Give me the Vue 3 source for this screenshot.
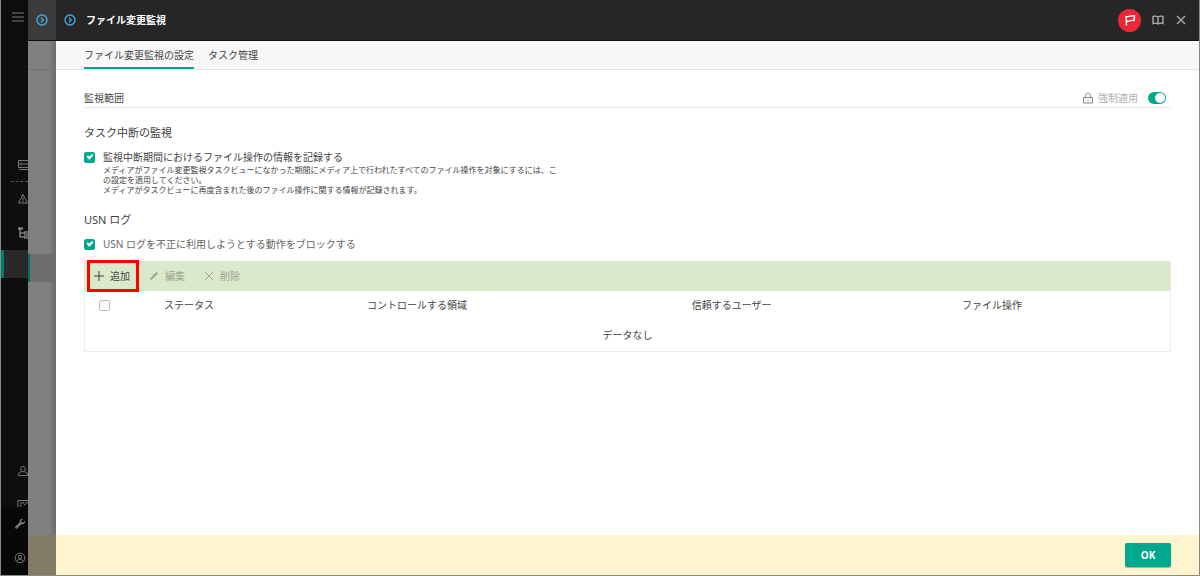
<template>
  <div class="console">
    <nav class="sideNav" aria-label="メニュー">
      <button type="button" class="navBtn menuBtn" aria-label="メニューを開く">
        <svg width="12" height="10" viewBox="0 0 12 10"><path d="M0 1h12M0 5h12M0 9h12" /></svg>
      </button>
      <div class="navGroup">
        <a href="#" class="navBtn" v-for="item in navTop" v-bind:key="item.name" v-bind:class="item.name" v-bind:aria-label="item.label">
          <svg width="12" height="12" viewBox="0 0 12 12"><path v-bind:d="item.path" /></svg>
        </a>
        <a href="#" class="navCurrent" aria-label="デバイス"></a>
      </div>
      <div class="navGroup navUser">
        <a href="#" class="navBtn" aria-label="ユーザー">
          <svg width="12" height="12" viewBox="0 0 12 12"><path d="M6 1.5c-1.5 0-2.3 1-2.3 2.4S4.5 6.8 6 6.8s2.3-1.5 2.3-2.9S7.5 1.5 6 1.5zM4.5 6.5L1.5 8.500v2h9v-2L7.5 6.5" /></svg>
        </a>
        <a href="#" class="navBtn navCut" aria-label="操作">
          <svg width="12" height="12" viewBox="0 0 12 12"><path d="M1 1.500h11v9H1zM3 4h4M3 6.500h2M7 6l4-3" /></svg>
        </a>
      </div>
      <div class="navFoot">
        <a href="#" class="navBtn" aria-label="設定">
          <svg width="12" height="12" viewBox="0 0 12 12"><path class="filled" d="M10.8 2.8L9 4.6 7.5 4.2 7.2 2.8 9 1C7.3.4 5.2 1.8 5.7 4.2L1.2 8.800c-.9 1 .8 2.700 1.800 1.800L7.600 6.200c2.200.6 3.900-1.300 3.200-3.400z" /></svg>
        </a>
        <a href="#" class="navBtn" aria-label="アカウント">
          <svg width="12" height="12" viewBox="0 0 12 12"><circle cx="6" cy="6" r="4.8" /><circle cx="6" cy="5" r="1.7" /><path d="M3.2 9.5c.4-3 5.2-3 5.6 0" /></svg>
        </a>
      </div>
    </nav>

    <div class="backPanel">
      <div class="backHead">
        <button type="button" class="iconBtn blue" aria-label="前のパネル">
          <svg width="12" height="12" viewBox="0 0 12 12"><circle cx="6" cy="6" r="5" /><path d="M5 3.8L7.2 6 5 8.2" /></svg>
        </button>
      </div>
      <div class="backTabs"></div>
      <div class="backBody"><div class="backCurrent"></div></div>
      <div class="backFoot"></div>
    </div>

    <main class="panel">
      <header class="panelHead">
        <button type="button" class="iconBtn blue" aria-label="パネルを閉じる">
          <svg width="12" height="12" viewBox="0 0 12 12"><circle cx="6" cy="6" r="5" /><path d="M5 3.8L7.2 6 5 8.2" /></svg>
        </button>
        <h1>ファイル変更監視</h1>
        <div class="headTools">
          <button type="button" class="iconBtn flagBtn" aria-label="通知">
            <svg width="12" height="12" viewBox="0 0 12 12"><path d="M2.5 11.5L2 2M2 2.5c2 1.2 4-1.7 8.500-.6L10 6.600C6.500 5.600 4.500 8 2.300 7" /></svg>
          </button>
          <button type="button" class="iconBtn" aria-label="ヘルプ">
            <svg width="12" height="12" viewBox="0 0 12 12"><path d="M6 3C4.500 2 2.500 2 1 2.500v7C2.500 9 4.500 9 6 10c1.500-1 3.500-1 5-.5v-7C9.500 2 7.500 2 6 3zM6 3v7" /></svg>
          </button>
          <button type="button" class="iconBtn" aria-label="閉じる">
            <svg width="12" height="12" viewBox="0 0 12 12"><path d="M2 2l8 8M10 2L2 10" /></svg>
          </button>
        </div>
      </header>

      <div class="tabs" role="tablist">
        <button type="button" role="tab" class="tab" v-for="(tab, tabIndex) in tabs" v-bind:key="tab" v-bind:class="{ active: tabIndex === currentTab }"
        v-bind:aria-selected="tabIndex === currentTab" v-on:click="currentTab = tabIndex">{{ tab }}</button>
      </div>

      <div class="content">
        <div class="scope">
          <h2>監視範囲</h2>
          <label class="enforce">
            <svg width="12" height="12" viewBox="0 0 12 12"><path d="M1.5 5.5h9v5.500h-9zM3.500 5.500V3.500c0-3 5-3 5 0v2M6 7.500v1.500" /></svg>
            <span>強制適用</span>
            <input type="checkbox" class="toggle" v-model="enforced">
          </label>
        </div>

        <section class="block">
          <h3>タスク中断の監視</h3>
          <label class="checkRow">
            <input type="checkbox" class="check" v-model="logBreak">
            <span>監視中断期間におけるファイル操作の情報を記録する</span>
          </label>
          <p class="hint">メディアがファイル変更監視タスクビューになかった期間にメディア上で行われたすべてのファイル操作を対象にするには、こ<br>の設定を適用してください。<br>メディアがタスクビューに再度含まれた後のファイル操作に関する情報が記録されます。</p>
        </section>

        <section class="block">
          <h3>USN ログ</h3>
          <label class="checkRow">
            <input type="checkbox" class="check" v-model="blockUsn">
            <span class="light">USN ログを不正に利用しようとする動作をブロックする</span>
          </label>
        </section>

        <div class="grid">
          <div class="toolbar">
            <button type="button" class="toolBtn addBtn">
              <svg width="12" height="12" viewBox="0 0 12 12"><path d="M6 1v10M1 6h10" /></svg>追加
            </button>
            <button type="button" class="toolBtn" disabled>
              <svg width="12" height="12" viewBox="0 0 12 12"><path class="filled" d="M2 10l.7-2.200L8.500 2 10 3.500 4.200 9.300z" /></svg>編集
            </button>
            <button type="button" class="toolBtn" disabled>
              <svg width="12" height="12" viewBox="0 0 12 12"><path d="M2 2l8 8M10 2L2 10" /></svg>削除
            </button>
          </div>
          <table>
            <thead>
              <tr>
                <th class="colCheck"><input type="checkbox" class="check" aria-label="すべて選択" v-model="allRows"></th>
                <th class="colStatus">ステータス</th>
                <th class="colArea">コントロールする領域</th>
                <th class="colUser">信頼するユーザー</th>
                <th class="colFile">ファイル操作</th>
                <td></td>
              </tr>
            </thead>
            <tbody>
              <tr><td colspan="6">データなし</td></tr>
            </tbody>
          </table>
        </div>
      </div>

      <footer class="panelFoot">
        <button type="button" class="okBtn">OK</button>
      </footer>
    </main>
  </div>
</template>

<script setup>
  import { ref } from 'vue';
  const tabs = ['ファイル変更監視の設定', 'タスク管理'];
  let currentTab = ref(0),
      enforced = ref(true),   // 強制適用
      logBreak = ref(true),
      blockUsn = ref(true),
      allRows = ref(false);
  // 左メニューのアイコン
  const navTop = [
    { name: 'server', label: 'サーバー', path: 'M1.5 1.5H12v7H1.5zM1.5 5H12M3.5 3.3h1M3.5 6.8h1M2 10.5h10' },
    { name: 'alert', label: 'アラート', path: 'M6 1.5L10.5 10h-9zM6 4.5v3M6 8v1' },
    { name: 'tree', label: '管理対象', path: 'M1 2h5M1 1h5M3 2v8h3M3 6h3M7 5h5v2H7zM7 9h5v2H7z' }
  ];
</script>

<style>
  body {
    margin: 0;
  }
</style>

<style scoped>
  * {
    box-sizing: border-box;
  }
  .console {
    display: flex;
    height: 100vh;
    border: solid #8a8a8a;
    border-width: 0 1px 1px 1px;
    font-family: "Noto Sans", "Noto Sans CJK JP", sans-serif;
    font-size: 10px;
    line-height: 16px;
    color: #444;
    background: #fff;
  }
  h1, h2, h3, p {
    margin: 0;
    font-weight: normal;
  }
  button {
    padding: 0;
    border: none;
    background: none;
    font: inherit;
    color: inherit;
  }
  svg {
    display: block;
    flex: none;
    fill: none;
    stroke: currentColor;
    stroke-width: 1;
  }
  .filled {
    fill: currentColor;
    stroke: none;
  }
  /* 左メニュー */
  .sideNav {
    display: flex;
    flex-direction: column;
    flex: none;
    width: 27px;
    overflow: hidden;
    background: #0e0e0c;
    color: #777;
  }
  .navBtn {
    display: flex;
    align-items: center;
    flex: none;
    height: 34px;
    padding-left: 16px;
    color: inherit;
  }
  .menuBtn {
    padding-left: 11px;
  }
  .navGroup {
    margin-top: 114px;
  }
  .server {
    margin-left: 10px;
    padding-left: 6px;
    border-bottom: 1px dashed #555;
  }
  .tree {
    color: #aaa;
  }
  .navCurrent {
    display: block;
    height: 28px;
    border-left: 3px solid #00806c;
    background: #292929;
  }
  .navUser {
    margin-top: auto;
  }
  .navCut {
    height: 19px;
    align-items: flex-start;
    padding-top: 11px;
    overflow: hidden;
  }
  .navFoot {
    flex: none;
    background: #080808;
  }
  .navFoot .navBtn {
    padding-left: 13px;
  }
  /* 背面のパネル */
  .backPanel {
    display: flex;
    flex-direction: column;
    flex: none;
    width: 28px;
    background: linear-gradient(to right, #808080 75%, #6c6c6c);
  }
  .backHead, .panelHead {
    display: flex;
    align-items: center;
    flex: none;
    height: 41px;
    background: #262626;
    border-bottom: 1px solid #111;
  }
  .backHead {
    justify-content: center;
    background: #3b3b3b;
  }
  .backTabs {
    height: 29px;
    border-bottom: 1px solid #737373;
  }
  .backBody {
    flex: 1;
    padding-top: 184px;
  }
  .backCurrent {
    height: 28px;
    border-left: 2px solid #00715f;
    background: #6e6e6e;
  }
  .backFoot {
    height: 40px;
    background: #827b66;
  }
  /* メインパネル */
  .panel {
    display: flex;
    flex-direction: column;
    flex: 1;
    min-width: 0;
  }
  .panelHead {
    padding: 0 12px 0 8px;
    gap: 10px;
    color: #fff;
  }
  .panelHead h1 {
    font-size: 10px;
    font-weight: bold;
  }
  .iconBtn {
    display: flex;
    align-items: center;
    justify-content: center;
    color: #aaa;
  }
  .iconBtn svg {
    stroke-width: 1.4;
  }
  .blue {
    color: #45a5dc;
  }
  .headTools {
    display: flex;
    align-items: center;
    gap: 11px;
    margin-left: auto;
  }
  .flagBtn {
    width: 23px;
    height: 23px;
    border-radius: 50%;
    background: #ee2737;
    color: #fff;
  }
  .tabs {
    display: flex;
    flex: none;
    gap: 14px;
    height: 29px;
    padding-left: 28px;
    background: #f7f7f7;
    border-bottom: 1px solid #e4e4e4;
  }
  .tab {
    height: 28px;
    border: solid transparent;
    border-width: 2px 0;
  }
  .tab.active {
    border-bottom-color: #00a88e;
  }
  .content {
    flex: 1;
    padding: 18px 28px 0;
  }
  .scope {
    display: flex;
    align-items: center;
    justify-content: space-between;
    height: 20px;
    border-bottom: 1px solid #e8e8e8;
  }
  .scope h2 {
    font-size: 10px;
  }
  .enforce {
    display: flex;
    align-items: center;
    gap: 4px;
    padding-right: 5px;
    color: #b0b0b0;
  }
  .enforce svg {
    color: #888;
  }
  .check, .toggle {
    appearance: none;
    display: flex;
    align-items: center;
    justify-content: center;
    flex: none;
    margin: 0;
  }
  .toggle {
    justify-content: flex-end;
    width: 18px;
    height: 12px;
    margin-left: 6px;
    padding: 0 1px;
    border-radius: 6px;
    background: #00a88e;
  }
  .toggle:not(:checked) {
    justify-content: flex-start;
    background: #bbb;
  }
  .toggle::after {
    content: "";
    width: 10px;
    height: 10px;
    border-radius: 50%;
    background: #fff;
  }
  .check {
    width: 11px;
    height: 11px;
    border: 1px solid #bbb;
    border-radius: 2px;
    background: #fff;
  }
  .check:checked {
    border-color: #00a88e;
    background: #00a88e;
  }
  .check:checked::after {
    content: "";
    width: 4px;
    height: 2px;
    margin-bottom: 2px;
    border: solid #fff;
    border-width: 0 0 2px 2px;
    box-sizing: content-box;
    transform: rotate(-45deg);
  }
  .block {
    padding-top: 17px;
  }
  .block h3 {
    font-size: 11px;
  }
  .checkRow {
    display: flex;
    align-items: center;
    gap: 8px;
    margin-top: 8px;
  }
  .light {
    color: #666;
  }
  .hint {
    padding-left: 19px;
    font-size: 8px;
    line-height: 10px;
  }
  .grid {
    margin-top: 9px;
    border: 1px solid #ececec;
    border-top: none;
  }
  .toolbar {
    display: flex;
    align-items: center;
    gap: 18px;
    height: 30px;
    padding-left: 5px;
    background: #dbe8c9;
  }
  .toolBtn {
    display: flex;
    align-items: center;
    gap: 5px;
    height: 26px;
  }
  .toolBtn:disabled {
    color: #9ba692;
  }
  .addBtn {
    margin-right: -6px;
    padding: 0 6px 0 3px;
    outline: 3px solid #f00;
  }
  table {
    width: 100%;
    table-layout: fixed;
    border-collapse: collapse;
  }
  th, td {
    height: 28px;
    padding: 0;
    font-weight: normal;
    text-align: center;
  }
  tbody td {
    height: 32px;
  }
  th .check {
    margin: 0 auto;
  }
  .colCheck {
    width: 39px;
  }
  .colStatus {
    width: 12%;
  }
  .colArea {
    width: 30%;
  }
  .colUser {
    width: 28%;
  }
  .colFile {
    width: 20%;
  }
  .panelFoot {
    display: flex;
    align-items: center;
    justify-content: flex-end;
    flex: none;
    height: 40px;
    padding-right: 28px;
    background: #fff6cf;
  }
  .okBtn {
    width: 46px;
    height: 24px;
    border-radius: 2px;
    background: #00a88e;
    box-shadow: 0 1px 1px #b5b08f;
    color: #fff;
    font-weight: bold;
  }
</style>
